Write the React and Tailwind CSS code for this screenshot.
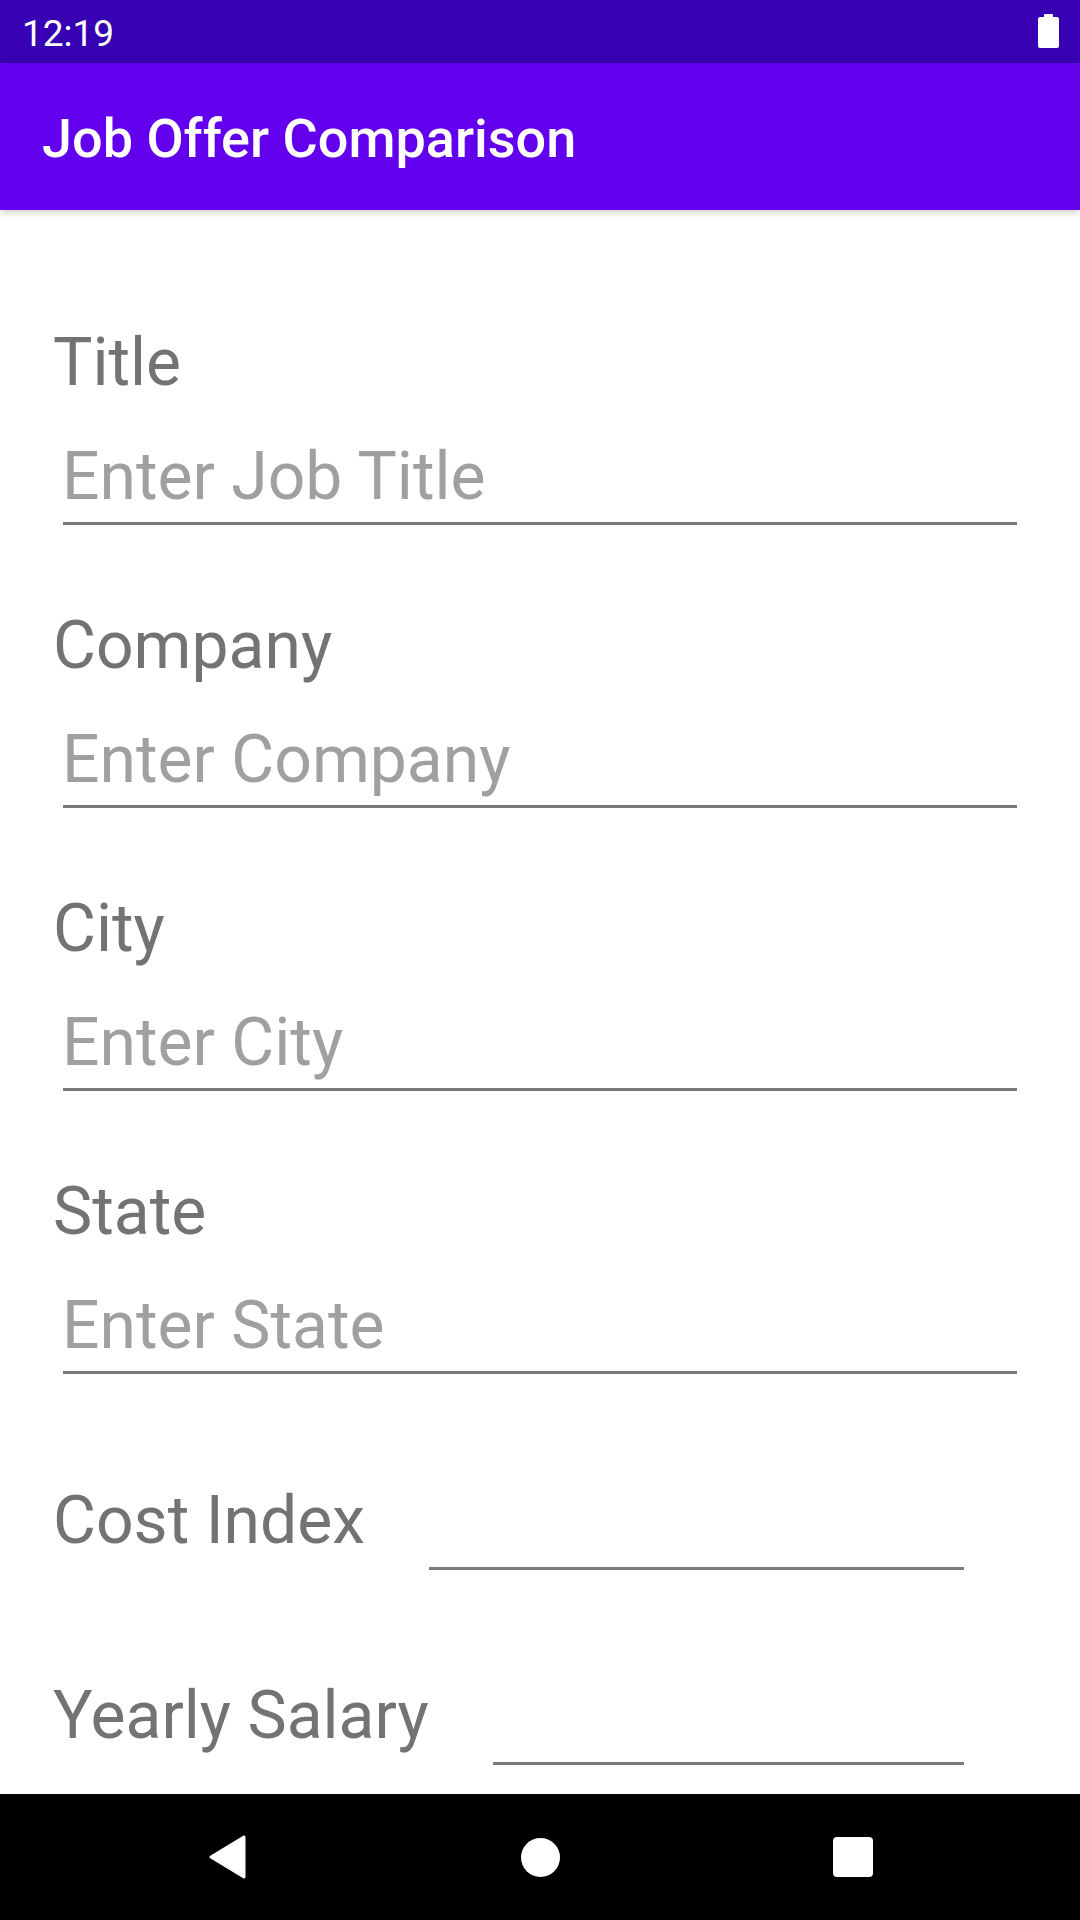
import React from "react";

const fields = [
  { label: "Title", hint: "Enter Job Title" },
  { label: "Company", hint: "Enter Company" },
  { label: "City", hint: "Enter City" },
  { label: "State", hint: "Enter State" },
];

function TextField({ label, hint, first }) {
  return (
    <div className={first ? "mt-[119px]" : "mt-[87px]"}>
      <div className="pl-[53px] text-[66px] leading-[67px] text-[#737373]">
        {label}
      </div>
      <div className="mx-[63px] mt-[47px] border-b-[3px] border-[#7a7a7a] pb-[12px]">
        <span className="-ml-[1px] block text-[66px] leading-[67px] text-[#a0a0a0]">
          {hint}
        </span>
      </div>
    </div>
  );
}

function InlineField({ label, className }) {
  return (
    <div className={`flex items-start pl-[53px] ${className}`}>
      <div className="text-[66px] leading-[67px] text-[#737373] whitespace-nowrap">
        {label}
      </div>
      <div className="ml-[64px] mr-[116px] h-[83px] flex-1 border-b-[3px] border-[#7a7a7a]" />
    </div>
  );
}

export default function App() {
  return (
    <div className="flex h-[1920px] w-[1080px] flex-col overflow-hidden bg-white font-['Roboto',sans-serif]">
      {/* Status bar */}
      <div className="flex h-[63px] shrink-0 items-start justify-between bg-[#3700B3] pl-[22px] pr-[21px] pt-[15px]">
        <span className="text-[37px] leading-none text-white">12:19</span>
        <div className="flex flex-col items-center">
          <div className="-mt-[1px] h-[3px] w-[9px] rounded-t-[1px] bg-white" />
          <div className="h-[31px] w-[21px] rounded-[2px] bg-white" />
        </div>
      </div>

      {/* App bar */}
      <div className="relative z-10 h-[147px] shrink-0 bg-[#6200EE] pl-[42px] pt-[49px] shadow-[0_2px_8px_rgba(0,0,0,0.22)]">
        <h1 className="text-[54px] font-medium leading-none text-white">
          Job Offer Comparison
        </h1>
      </div>

      {/* Form */}
      <div className="flex-1 overflow-hidden">
        {fields.map((f, i) => (
          <TextField key={f.label} label={f.label} hint={f.hint} first={i === 0} />
        ))}
        <InlineField label="Cost Index" className="mt-[113px]" />
        <InlineField label="Yearly Salary" className="mt-[112px]" />
      </div>

      {/* Nav bar */}
      <div className="flex h-[126px] shrink-0 items-center justify-center gap-[233px] bg-black">
        <div className="flex w-[80px] justify-center">
          <svg width="38" height="44" viewBox="0 0 38 44">
            <path
              d="M36 2 L36 42 L3 22 Z"
              fill="white"
              stroke="white"
              strokeWidth="3"
              strokeLinejoin="round"
            />
          </svg>
        </div>
        <div className="flex w-[80px] justify-center">
          <div className="h-[39px] w-[39px] rounded-full bg-white" />
        </div>
        <div className="flex w-[80px] justify-center">
          <div className="h-[40px] w-[40px] rounded-[4px] bg-white" />
        </div>
      </div>
    </div>
  );
}
